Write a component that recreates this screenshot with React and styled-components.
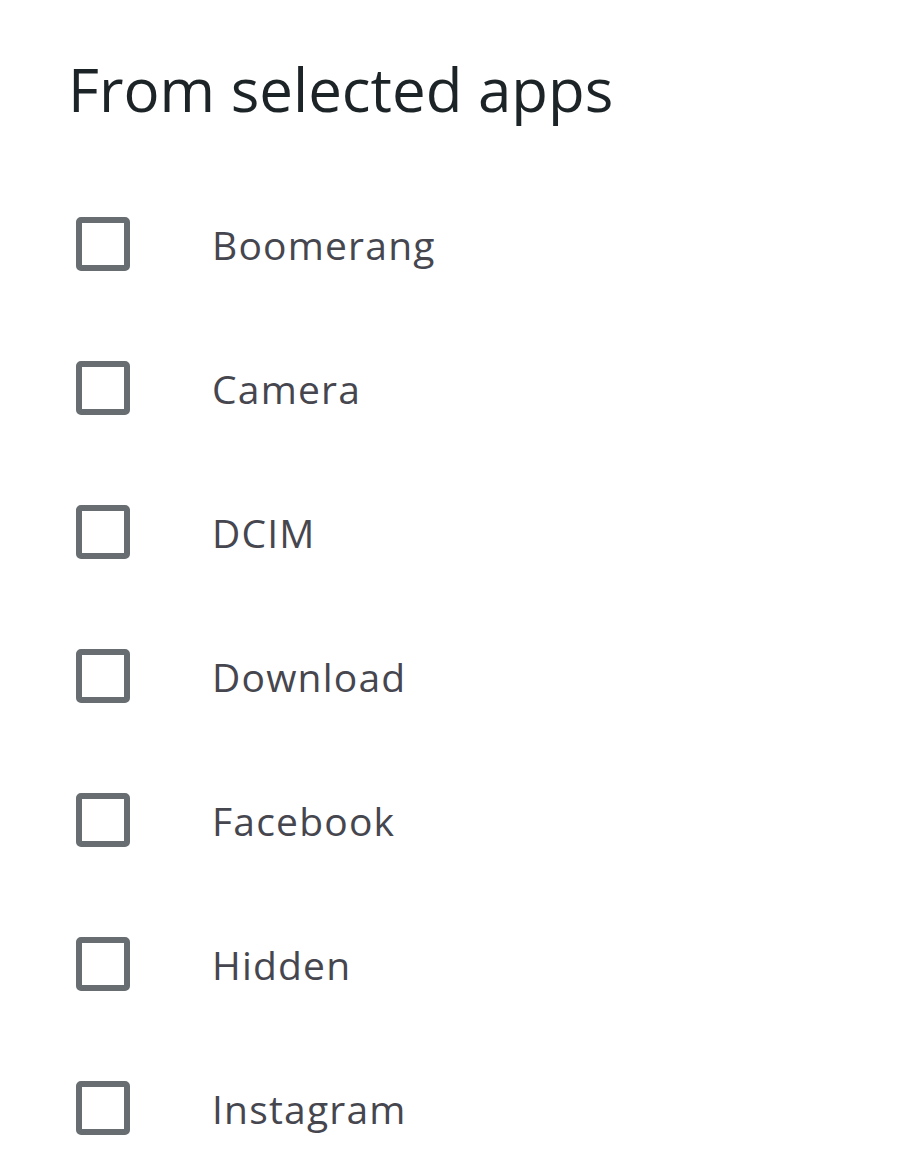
import React from "react";
import styled, { createGlobalStyle } from "styled-components";

const Global = createGlobalStyle`
  html, body { margin: 0; padding: 0; background: #ffffff; }
  body { font-family: "Open Sans", Roboto, "Liberation Sans", sans-serif; }
`;

const Page = styled.div`
  display: flex;
  flex-direction: column;
  padding: 0 0 0 68px;
`;

const Title = styled.h1`
  margin: 0;
  padding-top: 47px;
  font-size: 60px;
  line-height: 84px;
  font-weight: 400;
  color: #1d2427;
`;

const List = styled.div`
  display: flex;
  flex-direction: column;
  margin-top: 41px;
`;

const Row = styled.label`
  display: flex;
  align-items: center;
  height: 144px;
`;

const Box = styled.span`
  box-sizing: border-box;
  width: 54px;
  height: 54px;
  margin-left: 8px;
  border: 6px solid #676d70;
  border-radius: 5px;
  flex: none;
`;

const Label = styled.span`
  margin-left: 82px;
  font-size: 39px;
  color: #46464f;
  letter-spacing: 1.2px;
`;

const items = ["Boomerang", "Camera", "DCIM", "Download", "Facebook", "Hidden", "Instagram"];

export default function App() {
  return (
    <Page>
      <Global />
      <Title>From selected apps</Title>
      <List>
        {items.map((t) => (
          <Row key={t}>
            <Box />
            <Label>{t}</Label>
          </Row>
        ))}
      </List>
    </Page>
  );
}
